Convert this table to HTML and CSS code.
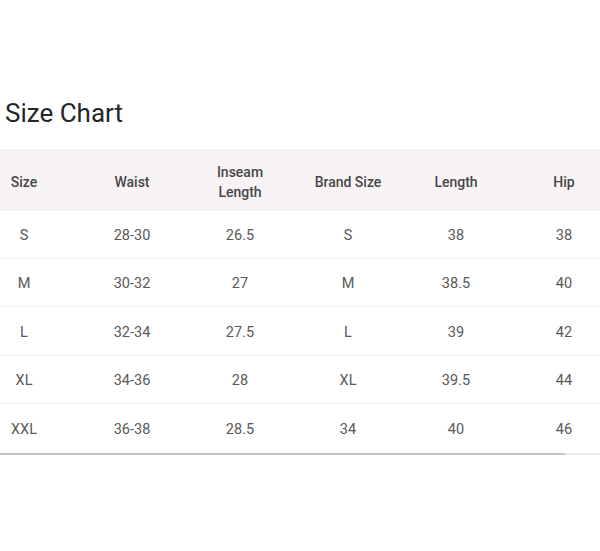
FILE: index.html
```html
<!DOCTYPE html>
<html>
<head>
<meta charset="utf-8">
<link rel="stylesheet" href="styles.css">
</head>
<body>
<div class="page">
  <h1 class="title">Size Chart</h1>
  <div class="scroller">
    <div class="chart">
      <div class="row head">
        <div class="cell">Size</div>
        <div class="cell">Waist</div>
        <div class="cell">Inseam<br>Length</div>
        <div class="cell">Brand Size</div>
        <div class="cell">Length</div>
        <div class="cell">Hip</div>
      </div>
      <div class="row">
        <div class="cell">S</div><div class="cell">28-30</div><div class="cell">26.5</div><div class="cell">S</div><div class="cell">38</div><div class="cell">38</div>
      </div>
      <div class="row">
        <div class="cell">M</div><div class="cell">30-32</div><div class="cell">27</div><div class="cell">M</div><div class="cell">38.5</div><div class="cell">40</div>
      </div>
      <div class="row">
        <div class="cell">L</div><div class="cell">32-34</div><div class="cell">27.5</div><div class="cell">L</div><div class="cell">39</div><div class="cell">42</div>
      </div>
      <div class="row">
        <div class="cell">XL</div><div class="cell">34-36</div><div class="cell">28</div><div class="cell">XL</div><div class="cell">39.5</div><div class="cell">44</div>
      </div>
      <div class="row last">
        <div class="cell">XXL</div><div class="cell">36-38</div><div class="cell">28.5</div><div class="cell">34</div><div class="cell">40</div><div class="cell">46</div>
      </div>
    </div>
    <div class="scrollbar"><div class="thumb"></div></div>
  </div>
</div>
</body>
</html>
```
FILE: styles.css
```css
html, body {
  margin: 0;
  padding: 0;
  background: #ffffff;
}
body {
  font-family: Roboto, "Liberation Sans", sans-serif;
  width: 600px;
  height: 551px;
  overflow: hidden;
}
.page {
  padding-top: 95px;
}
.title {
  margin: 0 0 19px 5px;
  font-size: 26px;
  font-weight: 400;
  line-height: 36px;
  color: #262626;
}
.scroller {
  width: 600px;
  overflow: hidden;
}
.chart {
  width: 648px;
  margin-left: -30px;
}
.row {
  display: grid;
  grid-template-columns: repeat(6, 108px);
  height: 48.5px;
  align-items: center;
  border-bottom: 1px solid #f1eff0;
  box-sizing: border-box;
}
.row.head {
  height: 60px;
  background: #f8f4f6;
  border-top: 1px solid #ede7ea;
  border-bottom: 1px solid #ece8ea;
}
.row.last {
  border-bottom: none;
}
.cell {
  text-align: center;
  font-size: 14.5px;
  line-height: 20px;
  padding-top: 4px;
  color: #595959;
}
.head .cell {
  font-size: 14px;
  font-weight: 500;
  color: #474747;
}
.scrollbar {
  height: 2px;
  background: #ececec;
}
.thumb {
  width: 565px;
  height: 2px;
  background: #c4c4c4;
}
```
